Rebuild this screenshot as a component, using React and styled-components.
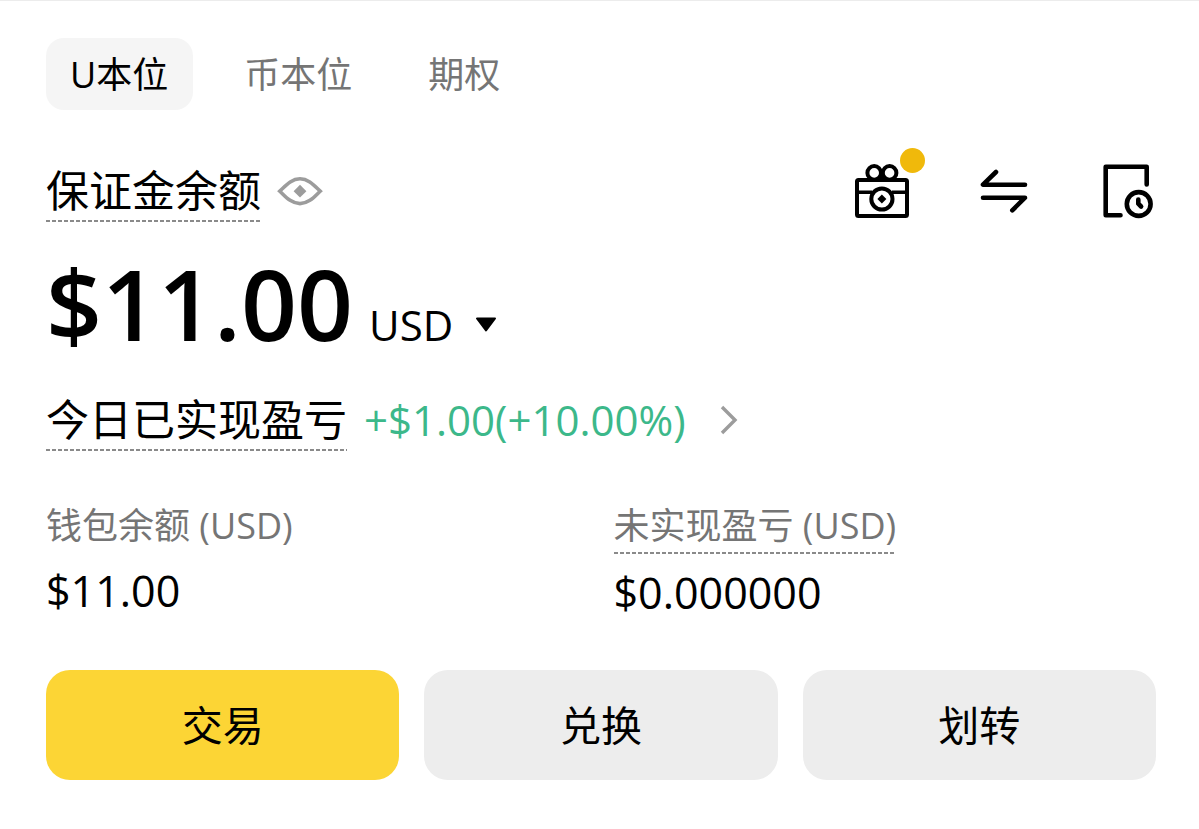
import React, { useState } from 'react';
import styled, { createGlobalStyle } from 'styled-components';

const GlobalStyle = createGlobalStyle`
    * {
        box-sizing: border-box;
    }

    body {
        margin: 0;
        background: #fff;
        color: #000;
        font-family: 'Open Sans', 'Noto Sans CJK SC', sans-serif;
    }

    button,
    select {
        padding: 0;
        border: 0;
        background: none;
        color: inherit;
        font: inherit;
        cursor: pointer;
    }

    svg {
        display: block;
    }
`

const Page = styled.main`
    padding: 37px 43px 48px 46px;
    border-top: 1px solid #ececec;
`

const Tabs = styled.nav`
    display: flex;
    gap: 27px;
`

const Tab = styled.button`
    height: 72px;
    padding: 2px 25px 0 24px;
    border-radius: 18px;
    background: ${props => props.$active ? '#f5f5f5' : 'transparent'};
    color: ${props => props.$active ? '#000' : '#757575'};
    font-size: 36px;
    line-height: 70px;
`

const BalanceRow = styled.div`
    display: flex;
    align-items: center;
    justify-content: space-between;
    margin-top: 50px;
`

const Group = styled.div`
    display: flex;
    align-items: center;
    gap: ${props => props.$gap};
`

// label with a dashed rule under it
const Underlined = styled.span`
    display: inline-block;
    padding-bottom: 2px;
    background: repeating-linear-gradient(90deg, #8a8a8a 0 4px, transparent 4px 6px) left bottom / 100% 2px no-repeat;
`

const Title = styled(Underlined)`
    padding-bottom: 0;
    font-size: 43px;
    line-height: 62px;
`

const IconButton = styled.button`
    position: relative;
`

const Badge = styled.span`
    position: absolute;
    top: -15px;
    right: -15px;
    width: 25px;
    height: 25px;
    border-radius: 50%;
    background: #f0b90b;
`

const Amount = styled.div`
    display: flex;
    align-items: baseline;
    margin-top: 33px;
    line-height: 96px;
`

const Total = styled.strong`
    font-size: 98px;
    font-weight: 600;
`

const Currency = styled.label`
    display: flex;
    align-items: center;
    gap: 22px;
    margin-left: 16px;

    select {
        appearance: none;
        field-sizing: content;
        font-size: 42px;
        line-height: 48px;
    }
`

const PnlLink = styled.a`
    display: flex;
    align-items: center;
    margin-top: 38px;
    color: inherit;
    text-decoration: none;
`

const Gain = styled.span`
    margin: 0 34px 0 17px;
    color: #3cb88a;
    font-size: 42px;
    line-height: 62px;
`

const Stats = styled.dl`
    display: grid;
    grid-template-columns: 1fr 1fr;
    gap: 25px;
    margin: 49px 0 0;

    dt {
        color: #757575;
        font-size: 36px;
        line-height: 52px;
    }

    dd {
        margin: 12px 0 0;
        font-size: 43px;
        line-height: 54px;
    }
`

const Actions = styled.div`
    display: grid;
    grid-template-columns: repeat(3, 1fr);
    gap: 25px;
    margin-top: 50px;
`

const Action = styled.button`
    height: 110px;
    padding-bottom: 4px;
    border-radius: 24px;
    background: ${props => props.$primary ? '#fcd535' : '#ededed'};
    font-size: 41px;
`

const EyeIcon = () => (
    <svg width="46" height="30" viewBox="0 0 46 30" fill="none">
        <path d="M2.8 15.2C8 10.5 14 2.8 23 2.8s15 7.7 20.2 12.4C38 20 32 27.6 23 27.6S8 20 2.8 15.2z" stroke="#9c9c9c" strokeWidth="3.6" />
        <path d="M23 8.8l6.4 6.4-6.4 6.4-6.4-6.4z" fill="#9c9c9c" />
    </svg>
)

const GiftIcon = () => (
    <svg width="56" height="56" viewBox="0 0 56 56" fill="none" stroke="#000" strokeWidth="4">
        <rect x="3" y="17" width="50" height="36" rx="1.5" />
        <path d="M3 29.2h15M38 29.2h15" strokeWidth="3.6" />
        <circle cx="27.9" cy="36" r="10.6" />
        <path d="M27.9 31.5l4.5 4.5-4.5 4.5-4.5-4.5z" fill="#000" stroke="none" />
        <circle cx="20.2" cy="9.9" r="6.8" />
        <circle cx="35.6" cy="9.9" r="6.8" />
        <path d="M27.9 10v7" />
    </svg>
)

const SwapIcon = () => (
    <svg width="56" height="56" viewBox="0 0 56 56" fill="none" stroke="#000" strokeWidth="4.6" strokeLinecap="round" strokeLinejoin="round">
        <path d="M19 9L6 21.7h42" />
        <path d="M6 34.7h42L35.3 47.3" />
    </svg>
)

const HistoryIcon = () => (
    <svg width="56" height="56" viewBox="0 0 56 56" fill="none" stroke="#000" strokeWidth="4.6" strokeLinecap="round" strokeLinejoin="round">
        <path d="M46.7 21.5V3.8h-41v48.4h14.8" />
        <circle cx="38.7" cy="41" r="11.9" />
        <path d="M38.3 36.5v4.2l2.8 2.8" />
    </svg>
)

const CaretIcon = () => (
    <svg width="22" height="16" viewBox="0 0 22 16">
        <path d="M2 1.5h18L11 13.5z" stroke="#000" strokeWidth="2" strokeLinejoin="round" />
    </svg>
)

const ChevronIcon = () => (
    <svg width="18" height="32" viewBox="0 0 18 32" fill="none" stroke="#9c9c9c" strokeWidth="3.4">
        <path d="M2 3l13 13L2 29" />
    </svg>
)

const tabs = ['U本位', '币本位', '期权']

const App = () => {
    const [active, setActive] = useState(tabs[0])

    return (
        <>
            <GlobalStyle />
            <Page>
                <Tabs>
                    {tabs.map(tab => (
                        <Tab key={tab} $active={tab === active} onClick={() => setActive(tab)}>{tab}</Tab>
                    ))}
                </Tabs>

                <BalanceRow>
                    <Group $gap="16px">
                        <Title>保证金余额</Title>
                        <IconButton aria-label="隐藏余额"><EyeIcon /></IconButton>
                    </Group>
                    <Group $gap="67px">
                        <IconButton aria-label="奖励"><GiftIcon /><Badge /></IconButton>
                        <IconButton aria-label="划转"><SwapIcon /></IconButton>
                        <IconButton aria-label="历史记录"><HistoryIcon /></IconButton>
                    </Group>
                </BalanceRow>

                <Amount>
                    <Total>$11.00</Total>
                    <Currency>
                        <select aria-label="货币">
                            <option>USD</option>
                        </select>
                        <CaretIcon />
                    </Currency>
                </Amount>

                <PnlLink href="#pnl">
                    <Title>今日已实现盈亏</Title>
                    <Gain>+$1.00(+10.00%)</Gain>
                    <ChevronIcon />
                </PnlLink>

                <Stats>
                    <div>
                        <dt>钱包余额 (USD)</dt>
                        <dd>$11.00</dd>
                    </div>
                    <div>
                        <dt><Underlined>未实现盈亏 (USD)</Underlined></dt>
                        <dd>$0.000000</dd>
                    </div>
                </Stats>

                <Actions>
                    <Action $primary>交易</Action>
                    <Action>兑换</Action>
                    <Action>划转</Action>
                </Actions>
            </Page>
        </>
    )
}

export default App;
